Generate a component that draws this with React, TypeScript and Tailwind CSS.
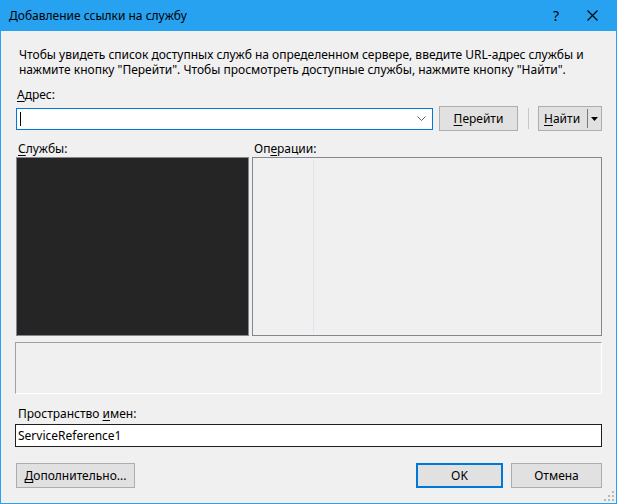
import React from "react";

function U({ children }: { children: React.ReactNode }) {
  return <span className="underline underline-offset-[2px] decoration-[1px]">{children}</span>;
}

export default function App() {
  return (
    <div className="w-[617px] h-[504px] flex flex-col bg-[#27a2f0] text-[12px] leading-[15px] text-black font-['Noto_Sans',sans-serif] overflow-hidden">
      {/* Title bar */}
      <div className="h-[31px] flex items-center pl-[9px] shrink-0">
        <span className="flex-1">Добавление ссылки на службу</span>
        <span className="text-[14px] mr-[28px]">?</span>
        <svg width="11" height="11" viewBox="0 0 11 11" className="mr-[19px]">
          <path d="M0.5 0.5 L10.5 10.5 M10.5 0.5 L0.5 10.5" stroke="#000" strokeWidth="1.1" />
        </svg>
      </div>
      {/* Body */}
      <div className="flex-1 mx-[1px] mb-[1px] bg-[#f0f0f0] relative flex flex-col">
        <div className="mt-[16px] pl-[18px]">
          <div>Чтобы увидеть список доступных служб на определенном сервере, введите URL-адрес службы и</div>
          <div>нажмите кнопку "Перейти". Чтобы просмотреть доступные службы, нажмите кнопку "Найти".</div>
        </div>
        <div className="mt-[10px] pl-[16px]">
          <U>А</U>дрес:
        </div>
        <div className="mt-[4px] pl-[15px] flex items-center h-[25px]">
          <div className="w-[417px] h-[22px] bg-white border border-[#0078d7] flex items-center pl-[3px] pr-[6px]">
            <div className="w-[1px] h-[14px] bg-black" />
            <div className="flex-1" />
            <svg width="9" height="6" viewBox="0 0 9 6">
              <path d="M0.5 0.5 L4.5 4.5 L8.5 0.5" stroke="#606060" fill="none" strokeWidth="1" />
            </svg>
          </div>
          <div className="ml-[6px] w-[79px] h-[25px] bg-[#e1e1e1] border border-[#adadad] flex items-center justify-center">
            <span><U>П</U>ерейти</span>
          </div>
          <div className="ml-[10px] w-[1px] h-[21px] bg-[#c8c8c8]" />
          <div className="ml-[9px] w-[64px] h-[25px] bg-[#e1e1e1] border border-[#adadad] flex items-center">
            <span className="pl-[5px] w-[48px]"><U>Н</U>айти</span>
            <div className="w-[1px] h-[19px] bg-[#7a7a7a]" />
            <div className="flex-1 flex justify-center">
              <svg width="7" height="4" viewBox="0 0 7 4">
                <path d="M0 0 H7 L3.5 4 Z" fill="#000" />
              </svg>
            </div>
          </div>
        </div>
        <div className="mt-[10px] pl-[17px] flex">
          <div className="w-[236px]">
            <U>С</U>лужбы:
          </div>
          <div>
            Оп<U>е</U>рации:
          </div>
        </div>
        <div className="mt-[1px] pl-[15px] flex">
          <div className="w-[233px] h-[179px] bg-[#252526] border border-[#828790]" />
          <div className="ml-[3px] w-[350px] h-[179px] border border-[#828790] bg-[#f0f0f0] pl-[60px] py-[2px] flex">
            <div className="w-[1px] h-full bg-[#dde4ec]" />
          </div>
        </div>
        <div className="mt-[6px] ml-[14px] w-[587px] h-[52px] border-t border-l border-[#a0a0a0] border-r-white border-b-white border-r border-b" />
        <div className="mt-[12px] pl-[17px]">
          Пространство <U>и</U>мен:
        </div>
        <div className="mt-[3px] ml-[14px] w-[587px] h-[23px] bg-white border border-[#1e1e1e] flex items-center pl-[2px]">
          ServiceReference1
        </div>
        <div className="mt-[16px] flex pl-[15px] pr-[14px]">
          <div className="w-[119px] h-[25px] bg-[#e1e1e1] border border-[#adadad] flex items-center justify-center">
            <span><U>Д</U>ополнительно...</span>
          </div>
          <div className="flex-1" />
          <div className="w-[87px] h-[25px] bg-[#e1e1e1] border-2 border-[#0078d7] flex items-center justify-center">
            OK
          </div>
          <div className="ml-[8px] w-[91px] h-[25px] bg-[#e1e1e1] border border-[#adadad] flex items-center justify-center">
            Отмена
          </div>
        </div>
        <svg width="10" height="10" viewBox="0 0 10 10" className="absolute right-[2px] bottom-[2px]">
          <rect x="8" y="0" width="2" height="2" fill="#b8b8b8" />
          <rect x="4" y="4" width="2" height="2" fill="#b8b8b8" />
          <rect x="8" y="4" width="2" height="2" fill="#b8b8b8" />
          <rect x="0" y="8" width="2" height="2" fill="#b8b8b8" />
          <rect x="4" y="8" width="2" height="2" fill="#b8b8b8" />
          <rect x="8" y="8" width="2" height="2" fill="#b8b8b8" />
        </svg>
      </div>
    </div>
  );
}
